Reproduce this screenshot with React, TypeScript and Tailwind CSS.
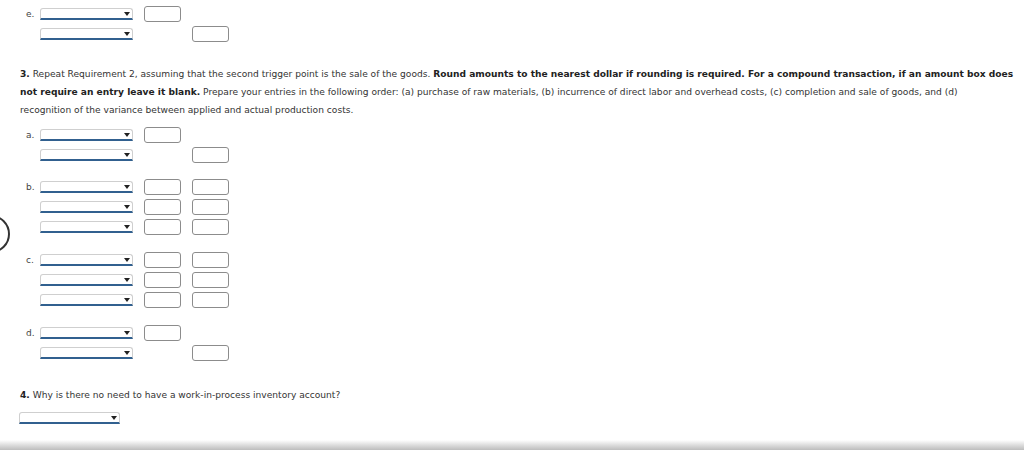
import React from "react";

const font = { fontFamily: '"DejaVu Sans", Verdana, sans-serif' };

function Sel({ w = 93 }: { w?: number }) {
  return (
    <div
      className="relative h-[12px] bg-white border border-[#cfcfcf] border-b-2 border-b-[#31608f] rounded-t-[3px] box-border"
      style={{ width: w }}
    >
      <div className="absolute right-[2px] top-[3px] w-0 h-0 border-l-[3px] border-r-[3px] border-t-[4px] border-l-transparent border-r-transparent border-t-[#222]" />
    </div>
  );
}

function Box() {
  return <div className="w-[37px] h-[16px] border border-[#8c8c8c] rounded-[3px] bg-white box-border" />;
}

function Row({ label, c1, c2 }: { label?: string; c1: boolean; c2: boolean }) {
  return (
    <div className="flex items-center h-[20px]">
      <div className="w-[40px] pl-[26px] text-[9px] text-[#444] leading-none">{label}</div>
      <Sel />
      <div className="w-[11px]" />
      <div className="w-[37px]">{c1 ? <Box /> : null}</div>
      <div className="w-[11px]" />
      <div className="w-[37px]">{c2 ? <Box /> : null}</div>
    </div>
  );
}

function Group({ label, rows, className = "" }: { label: string; rows: [boolean, boolean][]; className?: string }) {
  return (
    <div className={"flex flex-col " + className}>
      {rows.map((r, i) => (
        <Row key={i} label={i === 0 ? label : undefined} c1={r[0]} c2={r[1]} />
      ))}
    </div>
  );
}

export default function App() {
  return (
    <div className="relative w-[1024px] h-[450px] overflow-hidden bg-white text-[#333]" style={font}>
      <div className="absolute left-[-28px] top-[215px] w-[38px] h-[38px] rounded-full border-2 border-[#333]" />
      <div className="pt-[4px]">
        <Group label="e." rows={[[true, false], [false, true]]} />
      </div>
      <div className="mt-[21px] pl-[20px] text-[9.1px] leading-[18px] text-[#333] whitespace-nowrap">
        <div>
          <b className="text-[#222]">3.</b> Repeat Requirement 2, assuming that the second trigger point is the sale of the goods.{" "}
          <b className="text-[#222]">Round amounts to the nearest dollar if rounding is required. For a compound transaction, if an amount box does</b>
        </div>
        <div>
          <b className="text-[#222]">not require an entry leave it blank.</b> Prepare your entries in the following order: (a) purchase of raw materials, (b) incurrence of direct labor and overhead costs, (c) completion and sale of goods, and (d)
        </div>
        <div>recognition of the variance between applied and actual production costs.</div>
      </div>
      <div className="mt-[6px] flex flex-col">
        <Group label="a." rows={[[true, false], [false, true]]} />
        <Group label="b." className="mt-[12px]" rows={[[true, true], [true, true], [true, true]]} />
        <Group label="c." className="mt-[13px]" rows={[[true, true], [true, true], [true, true]]} />
        <Group label="d." className="mt-[13px]" rows={[[true, false], [false, true]]} />
      </div>
      <div className="mt-[23px] pl-[20px] text-[9.1px] leading-[18px] text-[#333]">
        <b className="text-[#222]">4.</b> Why is there no need to have a work-in-process inventory account?
      </div>
      <div className="mt-[8px] pl-[19px]">
        <Sel w={101} />
      </div>
      <div className="absolute left-0 right-0 bottom-0 h-[10px] bg-gradient-to-b from-[#ffffff] to-[#bdbdbd]" />
    </div>
  );
}
